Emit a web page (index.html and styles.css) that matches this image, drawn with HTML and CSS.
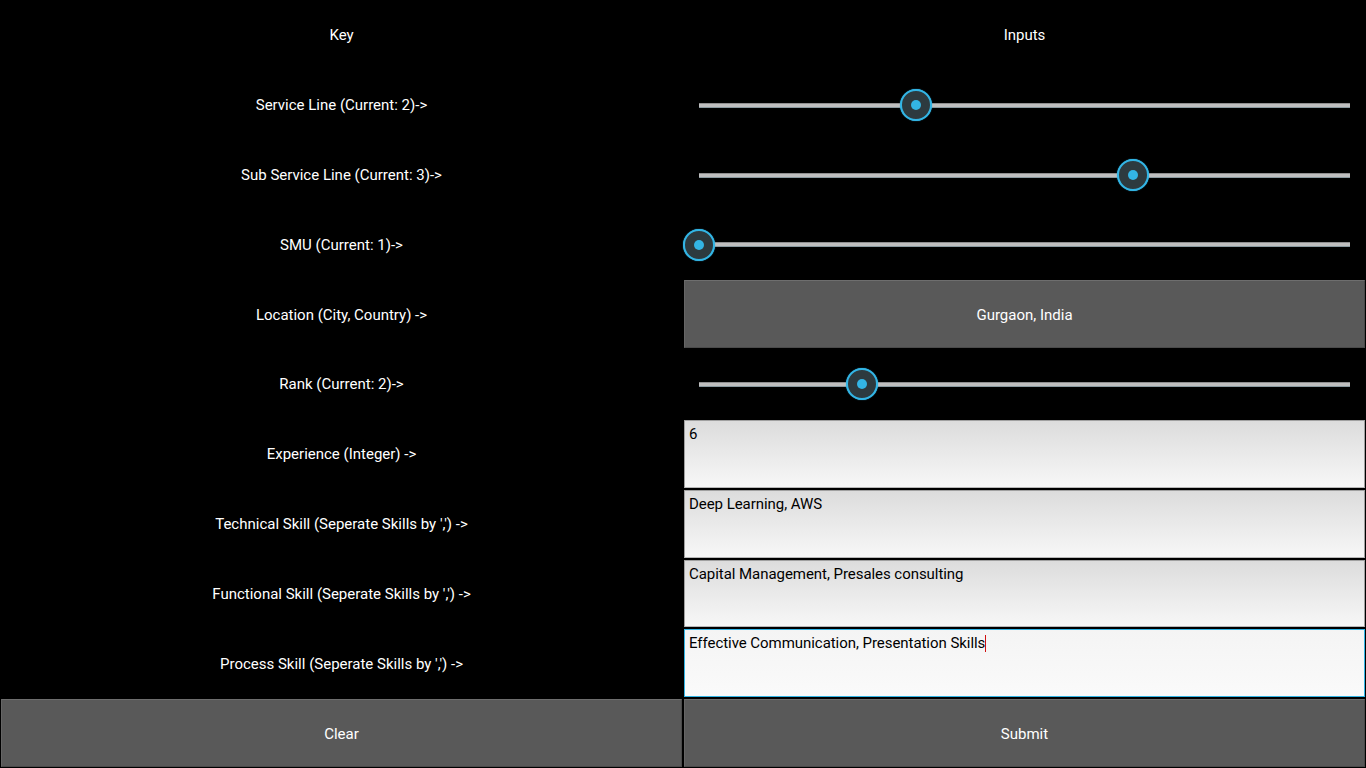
FILE: index.html
```html
<!DOCTYPE html>
<html>
<head>
<meta charset="utf-8">
<link rel="stylesheet" href="styles.css">
</head>
<body>
<div class="grid">
  <div class="label">Key</div>
  <div class="label">Inputs</div>

  <div class="label">Service Line (Current: 2)-&gt;</div>
  <div class="slider"><div class="track"><div class="thumb" style="left:33.333%"></div></div></div>

  <div class="label">Sub Service Line (Current: 3)-&gt;</div>
  <div class="slider"><div class="track"><div class="thumb" style="left:66.667%"></div></div></div>

  <div class="label">SMU (Current: 1)-&gt;</div>
  <div class="slider"><div class="track"><div class="thumb" style="left:0%"></div></div></div>

  <div class="label">Location (City, Country) -&gt;</div>
  <div class="btn-cell"><div class="btn">Gurgaon, India</div></div>

  <div class="label">Rank (Current: 2)-&gt;</div>
  <div class="slider"><div class="track"><div class="thumb" style="left:25%"></div></div></div>

  <div class="label">Experience (Integer) -&gt;</div>
  <div class="input-cell"><div class="input">6</div></div>

  <div class="label">Technical Skill (Seperate Skills by ',') -&gt;</div>
  <div class="input-cell"><div class="input">Deep Learning, AWS</div></div>

  <div class="label">Functional Skill (Seperate Skills by ',') -&gt;</div>
  <div class="input-cell"><div class="input">Capital Management, Presales consulting</div></div>

  <div class="label">Process Skill (Seperate Skills by ',') -&gt;</div>
  <div class="input-cell"><div class="input focused">Effective Communication, Presentation Skills<span class="cursor"></span></div></div>

  <div class="btn-cell"><div class="btn">Clear</div></div>
  <div class="btn-cell"><div class="btn">Submit</div></div>
</div>
</body>
</html>
```
FILE: styles.css
```css
html, body {
  margin: 0;
  padding: 0;
  background: #000;
  width: 1366px;
  height: 768px;
  overflow: hidden;
}
.grid {
  display: grid;
  grid-template-columns: 683px 683px;
  grid-template-rows: repeat(11, 1fr);
  height: 768px;
  font-family: Roboto, "Liberation Sans", sans-serif;
  font-size: 15px;
  color: #fff;
}
.label {
  display: flex;
  align-items: center;
  justify-content: center;
  padding-top: 1px;
}
.slider {
  display: flex;
  align-items: center;
  padding: 1px 16px 0 16px;
}
.track {
  position: relative;
  flex: 1;
  height: 5px;
  background: #bfbfbf;
  box-shadow: inset 0 1px 0 #8f8f8f, inset 0 -1px 0 #8a9aa0;
}
.thumb {
  position: absolute;
  top: 50%;
  width: 28px;
  height: 28px;
  margin: -16px 0 0 -16px;
  border: 2px solid #33b5e5;
  border-radius: 50%;
  background: #2d3a3f;
  box-shadow: 0 0 1px #33b5e5;
}
.thumb::after {
  content: "";
  position: absolute;
  left: 50%;
  top: 50%;
  width: 10px;
  height: 10px;
  margin: -5px 0 0 -5px;
  border-radius: 50%;
  background: #33b5e5;
}
.btn-cell {
  display: flex;
  padding: 1px;
}
.btn {
  flex: 1;
  display: flex;
  align-items: center;
  justify-content: center;
  padding-top: 2px;
  background: #595959;
  border-top: 1px solid #6e6e6e;
  border-left: 1px solid #666;
  border-right: 1px solid #4a4a4a;
  border-bottom: 1px solid #4a4a4a;
  color: #fff;
}
.input-cell {
  display: flex;
  padding: 1px;
}
.input {
  flex: 1;
  background: linear-gradient(#dcdcdc, #f7f7f7);
  border: 1px solid #a0a0a0;
  border-bottom-color: #b8b8b8;
  color: #000;
  padding: 4px 4px;
  line-height: 18px;
  letter-spacing: -0.05px;
}
.input.focused {
  background: linear-gradient(#f4f4f4, #fafafa);
  border-color: #33b5e5;
}
.cursor {
  display: inline-block;
  width: 0;
  height: 17px;
  border-right: 1px solid #d01010;
  vertical-align: -4px;
}
```
